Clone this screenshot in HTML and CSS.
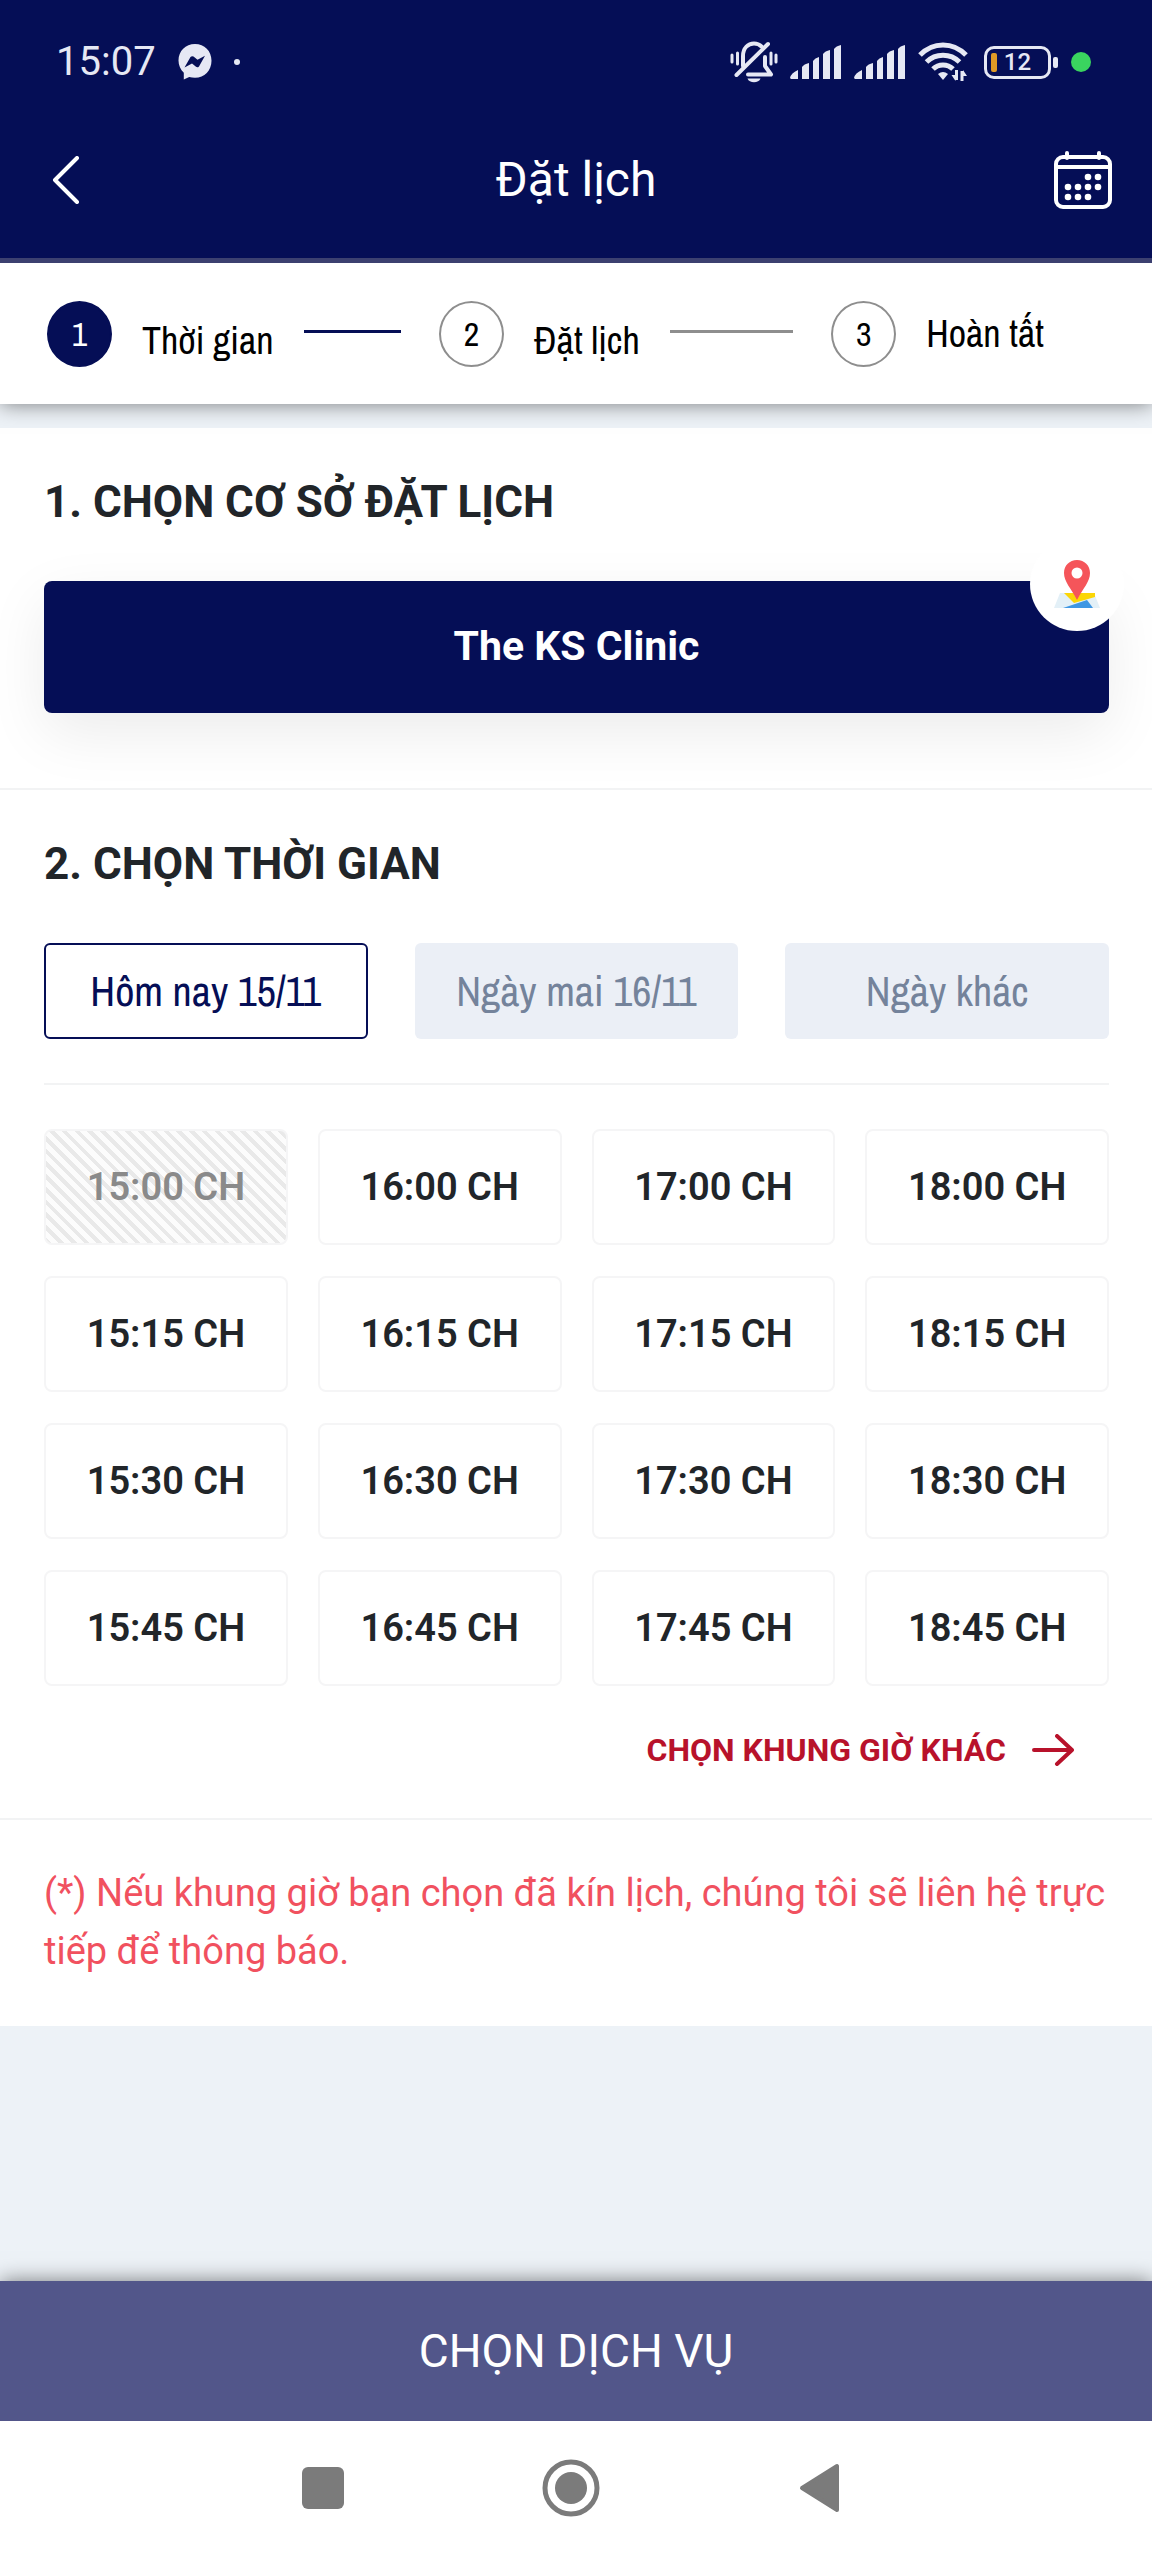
FILE: index.html
```html
<!DOCTYPE html>
<html lang="vi">
<head>
<meta charset="utf-8">
<meta name="viewport" content="width=device-width, initial-scale=1">
<title>Đặt lịch</title>
<link rel="stylesheet" href="styles.css">
</head>
<body>
<header class="top">
  <div class="status">
    <div class="status-left">
      <span class="clock">15:07</span>
      <svg class="messenger" width="34" height="36" viewBox="0 0 34 36" aria-hidden="true"><path fill="#e6e8f4" d="M17 0C7.500 0 .5 7 .5 16.500c0 5 2 9.200 5.300 12.200V35.500l5.400-2.600c1.800.5 3.800.8 5.800.8 9.500 0 16.500-7.200 16.500-17S26.500 0 17 0z"/><path fill="#050e56" d="M6.500 23.500l6-10.500q1.500-1.500 3-.4l4 3.200 7.500-4-6 10.600q-1.500 1.500-3 .4l-4-3.200z"/></svg>
      <span class="more-dot"></span>
    </div>
    <div class="status-right">
      <svg width="48" height="42" viewBox="0 0 48 42" fill="none" stroke="#e6e8f4" stroke-linecap="round" aria-hidden="true"><path stroke-width="3" d="M2 14v7M7.500 12v11M41 12v11M46 14v7"/><path stroke-width="4" d="M13 25V15C13 7 18 2.500 24 2.500c3 0 5.500 1 7.500 3"/><path stroke-width="4" d="M6.500 34L38 3"/><path stroke-width="4" stroke-linejoin="round" d="M35 16v9l6 8.500H18"/><path fill="#e6e8f4" stroke="none" d="M17.500 37.500h13c-1.500 5-11.500 5-13 0z"/></svg>
      <svg width="52" height="34" viewBox="0 0 52 34" fill="#e6e8f4" aria-hidden="true"><path d="M0 33q1-5 8-8v9H1zM12 22q2-3 7-4v16h-7zM23 16q2-3 6-4v22h-6zM33 9q2-3 7-4v29h-7zM44 4q2-3 7-4v34h-7z"/></svg>
      <svg width="52" height="34" viewBox="0 0 52 34" fill="#e6e8f4" aria-hidden="true"><path d="M0 33q1-5 8-8v9H1zM12 22q2-3 7-4v16h-7zM23 16q2-3 6-4v22h-6zM33 9q2-3 7-4v29h-7zM44 4q2-3 7-4v34h-7z"/></svg>
      <svg class="wifi" width="50" height="40" viewBox="0 0 50 40" fill="none" stroke="#e6e8f4" stroke-width="5" aria-hidden="true"><path d="M2 13C15-.5 35-.5 48 13M8.500 20c9-9 24-9 33 0M15 27c5.500-5.500 14.500-5.500 20 0"/><path fill="#e6e8f4" stroke="none" d="M20 32q5-4 10 0l-5 6z"/><path stroke-width="3" d="M38.500 28v10M44 39V29"/><path fill="#e6e8f4" stroke="none" d="M33.500 33h4v6zM49 34h-4v-6z"/></svg>
      <span class="battery"><i class="charge"></i><span>12</span></span>
      <span class="online"></span>
    </div>
  </div>
  <div class="appbar">
    <button class="icon-btn icon-btn-start" type="button" aria-label="Quay lại"><svg width="28" height="48" viewBox="0 0 28 48" fill="none" stroke="#fff" stroke-width="4" stroke-linecap="round" stroke-linejoin="round"><path d="M25 2L3 24l22 22"/></svg></button>
    <h1 class="title">Đặt lịch</h1>
    <button class="icon-btn icon-btn-end" type="button" aria-label="Lịch hẹn"><svg width="58" height="58" viewBox="0 0 58 58" fill="none" stroke="#fff" stroke-width="4" stroke-linecap="round"><rect x="2" y="6" width="54" height="50" rx="7"/><path d="M3 16h52M13 2v5M45 2v5"/><g fill="#fff" stroke="none"><circle cx="34" cy="26" r="3.300"/><circle cx="44" cy="26" r="3.300"/><circle cx="14" cy="36" r="3.300"/><circle cx="24" cy="36" r="3.300"/><circle cx="34" cy="36" r="3.300"/><circle cx="44" cy="36" r="3.300"/><circle cx="14" cy="46" r="3.300"/><circle cx="24" cy="46" r="3.300"/><circle cx="34" cy="46" r="3.300"/></g></svg></button>
  </div>
</header>

<ol class="steps">
  <li class="step step-active"><span class="step-num">1</span><span class="step-label">Thời gian</span><span class="step-line"></span></li>
  <li class="step"><span class="step-num">2</span><span class="step-label">Đặt lịch</span><span class="step-line"></span></li>
  <li class="step"><span class="step-num">3</span><span class="step-label">Hoàn tất</span></li>
</ol>

<main class="content">
  <section class="panel panel-place">
    <h2 class="heading">1. CHỌN CƠ SỞ ĐẶT LỊCH</h2>
    <div class="place">
      <button class="place-btn" type="button">The KS Clinic</button>
      <span class="map-badge"><svg width="46" height="50" viewBox="0 0 46 50" aria-hidden="true"><path fill="#e3f0f7" d="M6 34h34l6 15H0z"/><path fill="#fbd606" d="M10 34h31v4L20 44z"/><path fill="#3f97e3" d="M9 49l24-8 6 8z"/><path fill="#f5555a" d="M23 1C15.500 1 10 6.500 10 14c0 9 7 15 13 27 6-12 13-18 13-27C36 6.500 30.500 1 23 1z"/><circle cx="23" cy="14" r="5.500" fill="#fff"/></svg></span>
    </div>
  </section>

  <section class="panel panel-time">
    <h2 class="heading">2. CHỌN THỜI GIAN</h2>
    <div class="dates">
      <button class="date date-active" type="button">Hôm nay 15/11</button>
      <button class="date" type="button">Ngày mai 16/11</button>
      <button class="date" type="button">Ngày khác</button>
    </div>
    <div class="slots">
      <button class="slot" type="button" disabled>15:00 CH</button>
      <button class="slot" type="button">16:00 CH</button>
      <button class="slot" type="button">17:00 CH</button>
      <button class="slot" type="button">18:00 CH</button>
      <button class="slot" type="button">15:15 CH</button>
      <button class="slot" type="button">16:15 CH</button>
      <button class="slot" type="button">17:15 CH</button>
      <button class="slot" type="button">18:15 CH</button>
      <button class="slot" type="button">15:30 CH</button>
      <button class="slot" type="button">16:30 CH</button>
      <button class="slot" type="button">17:30 CH</button>
      <button class="slot" type="button">18:30 CH</button>
      <button class="slot" type="button">15:45 CH</button>
      <button class="slot" type="button">16:45 CH</button>
      <button class="slot" type="button">17:45 CH</button>
      <button class="slot" type="button">18:45 CH</button>
    </div>
    <a class="other" href="#khung-gio">CHỌN KHUNG GIỜ KHÁC <svg width="42" height="32" viewBox="0 0 42 32" fill="none" stroke="#b8122b" stroke-width="4" stroke-linecap="round" stroke-linejoin="round" aria-hidden="true"><path d="M2 16h38M25 2l15 14-15 14"/></svg></a>
  </section>

  <p class="note">(*) Nếu khung giờ bạn chọn đã kín lịch, chúng tôi sẽ liên hệ trực tiếp để thông báo.</p>
</main>

<button class="cta" type="button">CHỌN DỊCH VỤ</button>

<nav class="sysnav" aria-label="Điều hướng">
  <button class="nav-btn" type="button" aria-label="Gần đây"><svg width="58" height="58" viewBox="0 0 58 58"><rect x="8" y="8" width="42" height="42" rx="6" fill="#7b7b7b"/></svg></button>
  <button class="nav-btn" type="button" aria-label="Trang chủ"><svg width="58" height="58" viewBox="0 0 58 58"><circle cx="29" cy="29" r="26" fill="none" stroke="#7b7b7b" stroke-width="5"/><circle cx="29" cy="29" r="16" fill="#7b7b7b"/></svg></button>
  <button class="nav-btn" type="button" aria-label="Trở lại"><svg width="58" height="58" viewBox="0 0 58 58"><path d="M11 29L46 7v44z" fill="#7b7b7b" stroke="#7b7b7b" stroke-width="4" stroke-linejoin="round"/></svg></button>
</nav>
</body>
</html>
```

FILE: styles.css
```css
* { box-sizing: border-box; }

:root {
  --navy: #050e56;
  --pale: #edf2f7;
  --line: #f2f3f4;
  --ink: #212529;
  --narrow: "Archivo Narrow", "Roboto Condensed", "Open Sans Condensed", "Roboto", sans-serif;
}

body {
  margin: 0;
  min-height: 100vh;
  display: flex;
  flex-direction: column;
  background: var(--pale);
  color: var(--ink);
  font-family: "Roboto", sans-serif;
}

button {
  margin: 0;
  padding: 0;
  border: 0;
  background: none;
  color: inherit;
  font-family: inherit;
}

svg { display: block; }

.top {
  position: relative;
  z-index: 1;
  background: var(--navy);
  border-bottom: 5px solid #3c4070;
  color: #fff;
}

.status {
  display: flex;
  justify-content: space-between;
  padding: 38px 61px 0 56px;
  height: 116px;
  color: #e6e8f4;
}

.status-left,
.status-right {
  display: flex;
  align-items: center;
  height: 48px;
}

.status-left { gap: 22px; }
.status-right { gap: 12px; }

.clock {
  font-size: 40px;
  line-height: 48px;
}

.more-dot {
  width: 6px;
  height: 6px;
  border-radius: 50%;
  background: #e6e8f4;
}

.battery {
  position: relative;
  display: flex;
  align-items: center;
  justify-content: center;
  width: 67px;
  height: 33px;
  margin: 0 8px 0 4px;
  border: 3px solid #e6e8f4;
  border-radius: 10px;
  font-size: 24px;
  font-weight: 500;
}

.battery::after {
  content: "";
  position: absolute;
  right: -10px;
  top: 8px;
  width: 5px;
  height: 11px;
  border-radius: 2px;
  background: #e6e8f4;
}

.charge {
  position: absolute;
  left: 4px;
  top: 4px;
  width: 6px;
  height: 19px;
  border-radius: 2px;
  background: #e09a26;
}

.online {
  width: 20px;
  height: 20px;
  border-radius: 50%;
  background: #3ad45f;
}

.appbar {
  display: grid;
  grid-template-columns: 1fr auto 1fr;
  align-items: center;
  height: 142px;
  padding: 0 40px 14px;
}

.icon-btn-start {
  justify-self: start;
  padding-left: 12px;
}

.icon-btn-end { justify-self: end; }

.title {
  margin: 0;
  font-size: 48px;
  font-weight: 400;
  line-height: 56px;
}

.steps {
  position: relative;
  display: flex;
  margin: 0;
  padding: 38px 108px 37px 47px;
  background: #fff;
  box-shadow: 0 0 20px rgba(0, 0, 0, .5);
  list-style: none;
  color: #000;
  font-family: var(--narrow);
  font-size: 38px;
}

.step {
  display: flex;
  align-items: center;
}

.step:not(:last-child) {
  flex: 1;
}

.step-num {
  display: flex;
  align-items: center;
  justify-content: center;
  width: 65px;
  height: 66px;
  margin-right: 30px;
  border: 2px solid #8e8e8e;
  border-radius: 50%;
  font-size: 34px;
}

.step-active .step-num {
  border-color: var(--navy);
  background: var(--navy);
  color: #fff;
}

.step-label {
  line-height: 44px;
  white-space: nowrap;
}

.step:not(:last-child) .step-label { padding-top: 14px; }

.step-line {
  flex: 1;
  height: 3px;
  margin: 0 38px 5px 30px;
  background: #8e8e8e;
}

.step-active .step-line { background: var(--navy); }

.content {
  flex: 1;
  padding-top: 24px;
}

.panel {
  padding: 46px 43px 0 44px;
  background: #fff;
}

.panel-place {
  padding-bottom: 75px;
}

.heading {
  margin: 0;
  font-size: 44px;
  font-weight: 700;
  line-height: 56px;
}

.place {
  position: relative;
  margin-top: 51px;
}

.place-btn {
  display: block;
  width: 100%;
  height: 132px;
  padding-bottom: 2px;
  border-radius: 8px;
  background: var(--navy);
  box-shadow: 0 20px 60px rgba(0, 0, 0, .08);
  color: #fff;
  font-size: 41px;
  font-weight: 700;
}

.map-badge {
  position: absolute;
  right: -15px;
  top: -44px;
  display: flex;
  align-items: center;
  justify-content: center;
  width: 94px;
  height: 94px;
  border-radius: 50%;
  background: #fff;
}

.panel-time {
  position: relative;
  border-top: 2px solid var(--line);
  padding-bottom: 48px;
}

.dates {
  display: grid;
  grid-template-columns: repeat(3, 1fr);
  gap: 47px;
  margin-top: 51px;
  padding-bottom: 44px;
  border-bottom: 2px solid var(--line);
}

.date {
  height: 96px;
  border-radius: 6px;
  background: #ebeff6;
  color: #74839b;
  font-family: var(--narrow);
  font-size: 42px;
}

.date-active {
  border: 2px solid var(--navy);
  background: #fff;
  color: var(--navy);
}

.slots {
  display: grid;
  grid-template-columns: repeat(4, 1fr);
  gap: 31px 30px;
  margin-top: 44px;
}

.slot {
  height: 116px;
  border: 2px solid #f5f5f6;
  border-radius: 8px;
  background: #fff;
  color: var(--ink);
  font-size: 38px;
  font-weight: 600;
}

.slot:disabled {
  background: repeating-linear-gradient(45deg, #e9e9e9 0 4px, #fcfcfc 4px 9px);
  color: #8a8a8a;
}

.other {
  display: flex;
  align-items: center;
  justify-content: flex-end;
  gap: 26px;
  margin-top: 44px;
  padding-right: 35px;
  color: #b8122b;
  font-size: 32px;
  font-weight: 700;
  line-height: 40px;
  text-decoration: none;
}

.note {
  margin: 0;
  padding: 44px 42px 46px 44px;
  border-top: 2px solid var(--line);
  background: #fff;
  color: #f1515f;
  font-size: 38px;
  line-height: 58px;
}

.cta {
  position: relative;
  height: 140px;
  background: #52568a;
  box-shadow: 0 0 20px rgba(0, 0, 0, .5);
  color: #fff;
  font-size: 46px;
}

.sysnav {
  position: relative;
  display: grid;
  grid-template-columns: repeat(3, 1fr);
  height: 139px;
  padding: 0 208px 6px 199px;
  background: #fff;
}

.nav-btn {
  display: flex;
  align-items: center;
  justify-content: center;
}
```
